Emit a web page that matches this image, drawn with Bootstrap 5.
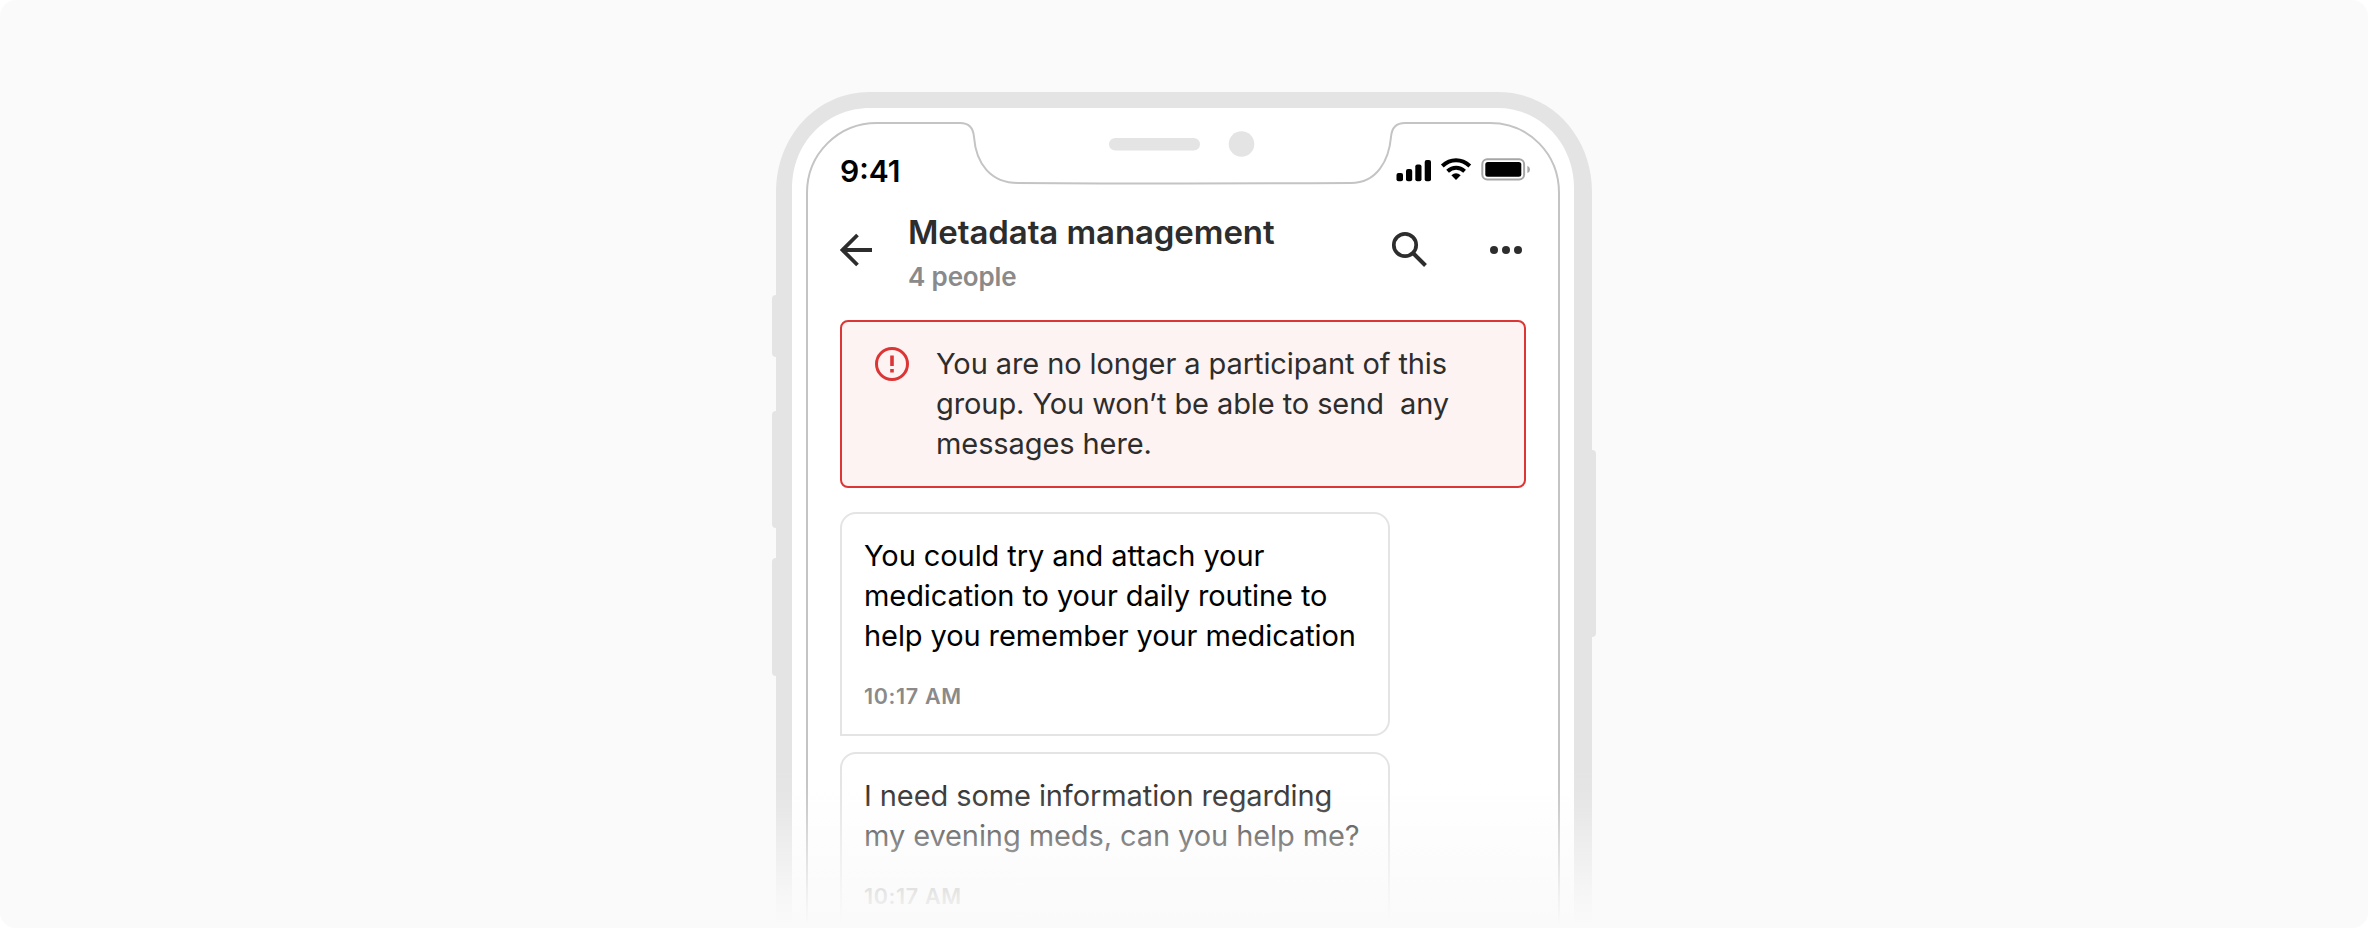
<!DOCTYPE html>
<html lang="en">
<head>
<meta charset="utf-8">
<meta name="viewport" content="width=device-width, initial-scale=1">
<title>Metadata management</title>
<link href="https://cdn.jsdelivr.net/npm/bootstrap@5.3.0/dist/css/bootstrap.min.css" rel="stylesheet">
<style>
body { background:#fff; font-family:Inter, "Liberation Sans", sans-serif; color:#2d2d2d; overflow:hidden; }
.stage { height:928px; background:#fafafa; border-radius:16px; padding-top:92px; padding-left:772px; }
.phone { width:824px; height:836px; }
.phone-art { left:0; top:0; }
.screen { width:824px; padding:0 70px 0 68px; }
.statusbar { height:110px; padding:59px 0 0 0; }
.clock { font-size:30px; line-height:40px; font-weight:600; color:#000; }
.status-icons { margin-top:5px; margin-right:-5px; }
.topbar { height:118px; }
.back { width:68px; padding-top:30px; }
.heading { font-size:33px; line-height:40px; font-weight:600; letter-spacing:-.1px; padding-top:10px; }
.subhead { font-size:26px; line-height:32px; font-weight:600; letter-spacing:-.15px; color:#8a8a8a; margin-top:9px; }
.actions { margin-top:26px; margin-right:1px; }
.notice { height:168px; border:2px solid #db3535; border-radius:8px; background:#fdf3f2; padding:22px 33px; }
.msg { font-size:29px; line-height:40px; letter-spacing:-.09px; }
.bubble { width:550px; height:224px; border:2px solid #e4e4e4; border-radius:16px 16px 16px 0; padding:22px 22px; margin-top:24px; color:#000; }
.bubble + .bubble { margin-top:16px; color:#2d2d2d; }
.stamp { font-size:21.500px; line-height:30px; font-weight:600; color:#8a8a8a; margin-top:25px; letter-spacing:.65px; }
.fade-out { left:0; right:0; bottom:0; height:178px; background:linear-gradient(#fafafa00, #fafafa08 35px, #fafafa24 56px, #fafafa61 85px, #fafafad6 146px, #fafafa 175px); }
.row-text { white-space:pre; }
</style>
</head>
<body>
<main class="stage position-relative overflow-hidden">
 <div class="phone position-relative">
  <svg class="phone-art position-absolute" width="824" height="836" viewBox="772 92 824 836" aria-hidden="true">
   <g fill="#e4e4e4">
    <rect x="772" y="295" width="20" height="62" rx="4"/>
    <rect x="772" y="411" width="20" height="117" rx="4"/>
    <rect x="772" y="558" width="20" height="118" rx="4"/>
    <rect x="1576" y="450" width="20" height="187" rx="4"/>
    <path d="M776 940V192C776 137 816 92 870 92H1498C1552 92 1592 137 1592 192V940Z"/>
   </g>
   <path fill="#fff" d="M792 940V188C792 143 826 108 870 108H1498C1540 108 1574 143 1574 188V940Z"/>
   <path fill="none" stroke="#c4c4c4" stroke-width="2" d="M807 940V193C807 154 838 123 877 123H960Q973 123 974 137C976 164 991 183 1018 183Q1184 184 1351 183C1377 183 1389 160 1391 137Q1392 123 1405 123H1490C1529 123 1559 154 1559 193V940"/>
   <rect x="1109" y="138" width="91" height="12.500" rx="6.250" fill="#e4e4e4"/>
   <circle cx="1241.500" cy="144" r="12.800" fill="#e4e4e4"/>
  </svg>
  <div class="screen position-relative">
   <div class="statusbar d-flex justify-content-between">
    <div class="clock">9:41</div>
    <svg class="status-icons" width="136" height="26" viewBox="1395 156 136 26" aria-hidden="true">
     <rect x="1396.500" y="173" width="6.500" height="8.300" rx="2"/>
     <rect x="1406" y="169" width="6.200" height="12.300" rx="2"/>
     <rect x="1415.300" y="164.500" width="6.200" height="16.800" rx="2"/>
     <rect x="1424.700" y="160" width="6.300" height="21.300" rx="2"/>
     <path d="M1442.300 166C1450.500 158.300 1461.500 158.300 1469.800 166" fill="none" stroke="#000" stroke-width="4"/>
     <path d="M1447.600 171.200C1452.700 166.600 1459.500 166.600 1464.600 171.200" fill="none" stroke="#000" stroke-width="4"/>
     <path d="M1451.400 175.200Q1456 171.400 1460.700 175.200L1456 180Z"/>
     <rect x="1482.300" y="159.200" width="41.800" height="20.300" rx="5" fill="none" stroke="#a6a6a6" stroke-width="2"/>
     <rect x="1485.300" y="162" width="36" height="14.700" rx="2.500"/>
     <path d="M1527.400 165.800Q1530 167 1530 169.500T1527.400 173Z" fill="#a6a6a6"/>
    </svg>
   </div>
   <header class="topbar d-flex">
    <div class="back"><svg width="34" height="36" viewBox="840 232 34 36" fill="none" stroke="#2d2d2d" stroke-width="3.800" aria-hidden="true"><path d="M872 250H843M857.500 235L842.500 250L857.500 265"/></svg></div>
    <div class="flex-grow-1"><div class="heading">Metadata management</div><div class="subhead">4 people</div></div>
    <svg class="actions" width="134" height="40" viewBox="1391 228 134 40" aria-hidden="true"><g fill="none" stroke="#2d2d2d"><circle cx="1405" cy="245" r="11.200" stroke-width="3.700"/><path d="M1413 253L1425.500 265.500" stroke-width="4"/></g><g fill="#2d2d2d"><circle cx="1494" cy="250" r="4"/><circle cx="1506" cy="250" r="4"/><circle cx="1518" cy="250" r="4"/></g></svg>
   </header>
   <section class="notice d-flex" role="alert">
    <svg class="flex-shrink-0" width="61" height="40" viewBox="875 344 61 40" aria-hidden="true"><circle cx="892" cy="364" r="15.500" fill="none" stroke="#db3535" stroke-width="3"/><path d="M890.200 355.500h3.600v10.500h-3.600zM890.200 369h3.600v3.500h-3.600z" fill="#db3535"/></svg>
    <div class="msg row-text">You are no longer a participant of this
group. You won’t be able to send  any
messages here.</div>
   </section>
   <article class="bubble"><div class="msg row-text">You could try and attach your
medication to your daily routine to
help you remember your medication</div><div class="stamp">10:17 AM</div></article>
   <article class="bubble"><div class="msg row-text">I need some information regarding
my evening meds, can you help me?</div><div class="stamp">10:17 AM</div></article>
  </div>
 </div>
 <div class="fade-out position-absolute"></div>
</main>
<script src="https://cdn.jsdelivr.net/npm/bootstrap@5.3.0/dist/js/bootstrap.bundle.min.js"></script>
</body>
</html>
